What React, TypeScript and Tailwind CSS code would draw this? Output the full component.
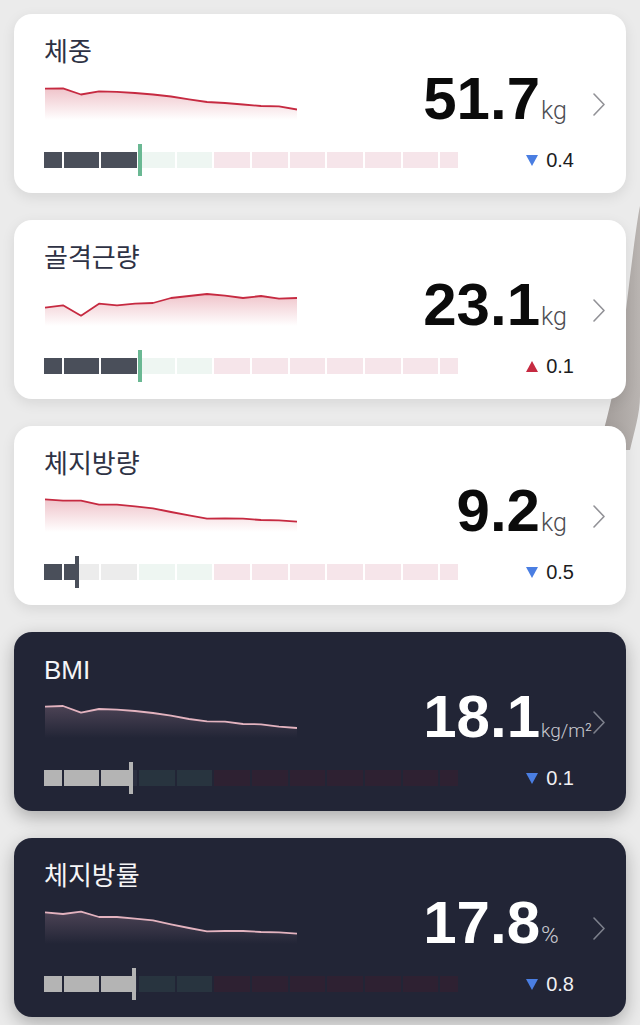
import React from 'react';

type Metric = {
  title: string;
  value: string;
  unit: string;
  unitClass: string;
  delta: string;
  up: boolean;
  dark: boolean;
  marker: number;
  markerColor: string;
  points: number[];
};

const metrics: Metric[] = [
  {
    title: '체중',
    value: '51.7',
    unit: 'kg',
    unitClass: 'text-[25px]',
    delta: '0.4',
    up: false,
    dark: false,
    marker: 94,
    markerColor: '#6ab893',
    points: [4.7, 4.3, 10.5, 7.3, 7.8, 9, 10.5, 12.5, 15.3, 18, 19, 20.5, 22, 22.3, 25.5],
  },
  {
    title: '골격근량',
    value: '23.1',
    unit: 'kg',
    unitClass: 'text-[25px]',
    delta: '0.1',
    up: true,
    dark: false,
    marker: 94,
    markerColor: '#6ab893',
    points: [17.7, 15.3, 25.7, 13.7, 15.3, 13.7, 13, 8, 6, 4, 5.7, 8, 6, 8.7, 8],
  },
  {
    title: '체지방량',
    value: '9.2',
    unit: 'kg',
    unitClass: 'text-[25px]',
    delta: '0.5',
    up: false,
    dark: false,
    marker: 31,
    markerColor: '#4a4f5a',
    points: [3.3, 4.7, 4.7, 8.7, 8.7, 10.3, 12.3, 16, 19.3, 22.7, 22.3, 22.7, 24, 24.3, 25.7],
  },
  {
    title: 'BMI',
    value: '18.1',
    unit: 'kg/m²',
    unitClass: 'text-[19px]',
    delta: '0.1',
    up: false,
    dark: true,
    marker: 85,
    markerColor: '#b4b4b4',
    points: [4.7, 4, 10.7, 7, 7.7, 9, 11, 13.7, 17, 19.3, 19.7, 22, 22.3, 24.7, 26],
  },
  {
    title: '체지방률',
    value: '17.8',
    unit: '%',
    unitClass: 'text-[24px]',
    delta: '0.8',
    up: false,
    dark: true,
    marker: 88,
    markerColor: '#b4b4b4',
    points: [4.3, 6, 3.7, 9, 9, 10.7, 12.3, 16.3, 20, 23.3, 23, 23, 24, 24.3, 25.7],
  },
];

// 12 slots, first and last are half width, 2px gaps, 414px total
const UNIT = 35.6;
const slots = Array.from({ length: 12 }, (_, i) => {
  const half = i === 0 || i === 11;
  const width = half ? UNIT / 2 : UNIT;
  const start = i === 0 ? 0 : UNIT / 2 + 2 + (i - 1) * (UNIT + 2);
  const zone = i < 3 ? 0 : i < 5 ? 1 : 2;
  return { start, width, zone };
});

function Chart({ points, dark, id }: { points: number[]; dark: boolean; id: string }) {
  const pts = points.map((y, i) => `${1 + i * 18},${y}`);
  const line = 'M' + pts.join(' L');
  const area = `${line} L253,36 L1,36 Z`;
  const stroke = dark ? '#e3b3bf' : '#c62a41';
  return (
    <svg width="253" height="36" viewBox="0 0 253 36" className="block">
      <defs>
        <linearGradient id={id} x1="0" y1="0" x2="0" y2="1">
          <stop offset="0%" stopColor={dark ? '#9a7a8e' : '#c62a41'} stopOpacity={dark ? 0.35 : 0.28} />
          <stop offset="100%" stopColor={dark ? '#9a7a8e' : '#c62a41'} stopOpacity={0} />
        </linearGradient>
      </defs>
      <path d={area} fill={`url(#${id})`} />
      <path d={line} fill="none" stroke={stroke} strokeWidth="1.8" strokeLinejoin="round" />
    </svg>
  );
}

function RangeBar({ marker, markerColor, dark }: { marker: number; markerColor: string; dark: boolean }) {
  const base = dark ? ['#2b2f40', '#28343f', '#2e2132'] : ['#ececec', '#eef6f2', '#f6e5ea'];
  const fill = dark ? '#b4b4b4' : '#4a4f5a';
  return (
    <div className="relative h-[32px] w-[414px]">
      <div className="flex h-full items-center gap-[2px]">
        {slots.map((s, i) => {
          const filled = Math.max(0, Math.min(s.width, marker - s.start));
          return (
            <div
              key={i}
              className={`relative h-[16px] overflow-hidden ${i === 0 || i === 11 ? 'flex-[1]' : 'flex-[2]'}`}
              style={{ backgroundColor: base[s.zone] }}
            >
              {filled > 0 && (
                <div className="h-full" style={{ width: filled, backgroundColor: fill }} />
              )}
            </div>
          );
        })}
      </div>
      <div
        className="absolute top-0 h-[32px] w-[4px]"
        style={{ left: marker, backgroundColor: markerColor }}
      />
    </div>
  );
}

function Triangle({ up }: { up: boolean }) {
  return (
    <svg width="12" height="11" viewBox="0 0 12 11" className="block">
      {up ? (
        <polygon points="6,0 12,11 0,11" fill="#c62a41" />
      ) : (
        <polygon points="0,0 12,0 6,11" fill="#4a7ee2" />
      )}
    </svg>
  );
}

function MetricCard({ m, idx }: { m: Metric; idx: number }) {
  return (
    <div
      className={`relative z-10 mx-[14px] flex h-[179px] rounded-[18px] pl-[30px] pr-[21px] ${
        m.dark
          ? 'bg-[#222536] shadow-[0_6px_18px_rgba(0,0,0,0.28)]'
          : 'bg-white shadow-[0_4px_14px_rgba(0,0,0,0.09)]'
      }`}
    >
      <div className="flex w-[414px] shrink-0 flex-col pt-[25px]">
        <div
          className={`h-[26px] whitespace-nowrap text-[26px] leading-[26px] ${
            m.dark ? 'text-[#f5f5f7]' : 'text-[#2e3244]'
          }`}
          style={{ fontFamily: "'Liberation Sans', 'Noto Sans CJK KR', sans-serif" }}
        >
          {m.title}
        </div>
        <div className="mt-[19px]">
          <Chart points={m.points} dark={m.dark} id={`grad-${idx}`} />
        </div>
        <div className="mt-[24px]">
          <RangeBar marker={m.marker} markerColor={m.markerColor} dark={m.dark} />
        </div>
      </div>

      <div className="flex min-w-0 flex-1 flex-col">
        <div className="mt-[55px] flex items-baseline justify-end">
          <div
            className={`shrink-0 whitespace-nowrap text-right text-[60px] font-bold leading-[60px] ${
              m.dark ? 'text-white' : 'text-[#0b0b0b]'
            }`}
            style={{ fontFamily: "'Liberation Sans', Arial, sans-serif" }}
          >
            {m.value}
          </div>
          <div
            className={`w-[53px] shrink-0 whitespace-nowrap pl-[1px] font-light leading-none ${m.unitClass} ${
              m.dark ? 'text-[#c9cad1]' : 'text-[#4d4d52]'
            }`}
            style={{ fontFamily: "Roboto, 'Liberation Sans', sans-serif" }}
          >
            {m.unit}
          </div>
          <svg
            width="12"
            height="23"
            viewBox="0 0 12 23"
            className="mt-[24px] block shrink-0 self-start"
          >
            <polyline
              points="1,1 11,11.5 1,22"
              fill="none"
              stroke={m.dark ? '#7d808c' : '#929297'}
              strokeWidth="1.6"
              strokeLinejoin="round"
              strokeLinecap="round"
            />
          </svg>
        </div>
        <div className="mt-[21px] flex items-center justify-end gap-[8px] pr-[31px]">
          <Triangle up={m.up} />
          <span
            className={`text-[20px] leading-[20px] ${m.dark ? 'text-[#f0f0f2]' : 'text-[#1c1c1e]'}`}
            style={{ fontFamily: "'Liberation Sans', Arial, sans-serif" }}
          >
            {m.delta}
          </span>
        </div>
      </div>
    </div>
  );
}

export default function App() {
  return (
    <div className="relative min-h-[1025px] w-[640px] overflow-hidden bg-[#ebebeb]">
      {/* decorative curved strip peeking behind the cards */}
      <svg
        width="60"
        height="260"
        viewBox="0 0 60 260"
        className="absolute left-[580px] top-[200px] z-0"
      >
        <defs>
          <linearGradient id="strip" x1="0" y1="0" x2="1" y2="0">
            <stop offset="0%" stopColor="#9f9996" />
            <stop offset="100%" stopColor="#b9b4b1" />
          </linearGradient>
        </defs>
        <path
          d="M60 6 C 57 20, 52 60, 46 110 C 39 170, 29 215, 18 250 L 50 250 C 54 232, 60 214, 60 196 Z"
          fill="url(#strip)"
        />
      </svg>

      <div className="relative flex flex-col gap-[27px] pt-[14px]">
        {metrics.map((m, i) => (
          <MetricCard key={m.title} m={m} idx={i} />
        ))}
      </div>
    </div>
  );
}
